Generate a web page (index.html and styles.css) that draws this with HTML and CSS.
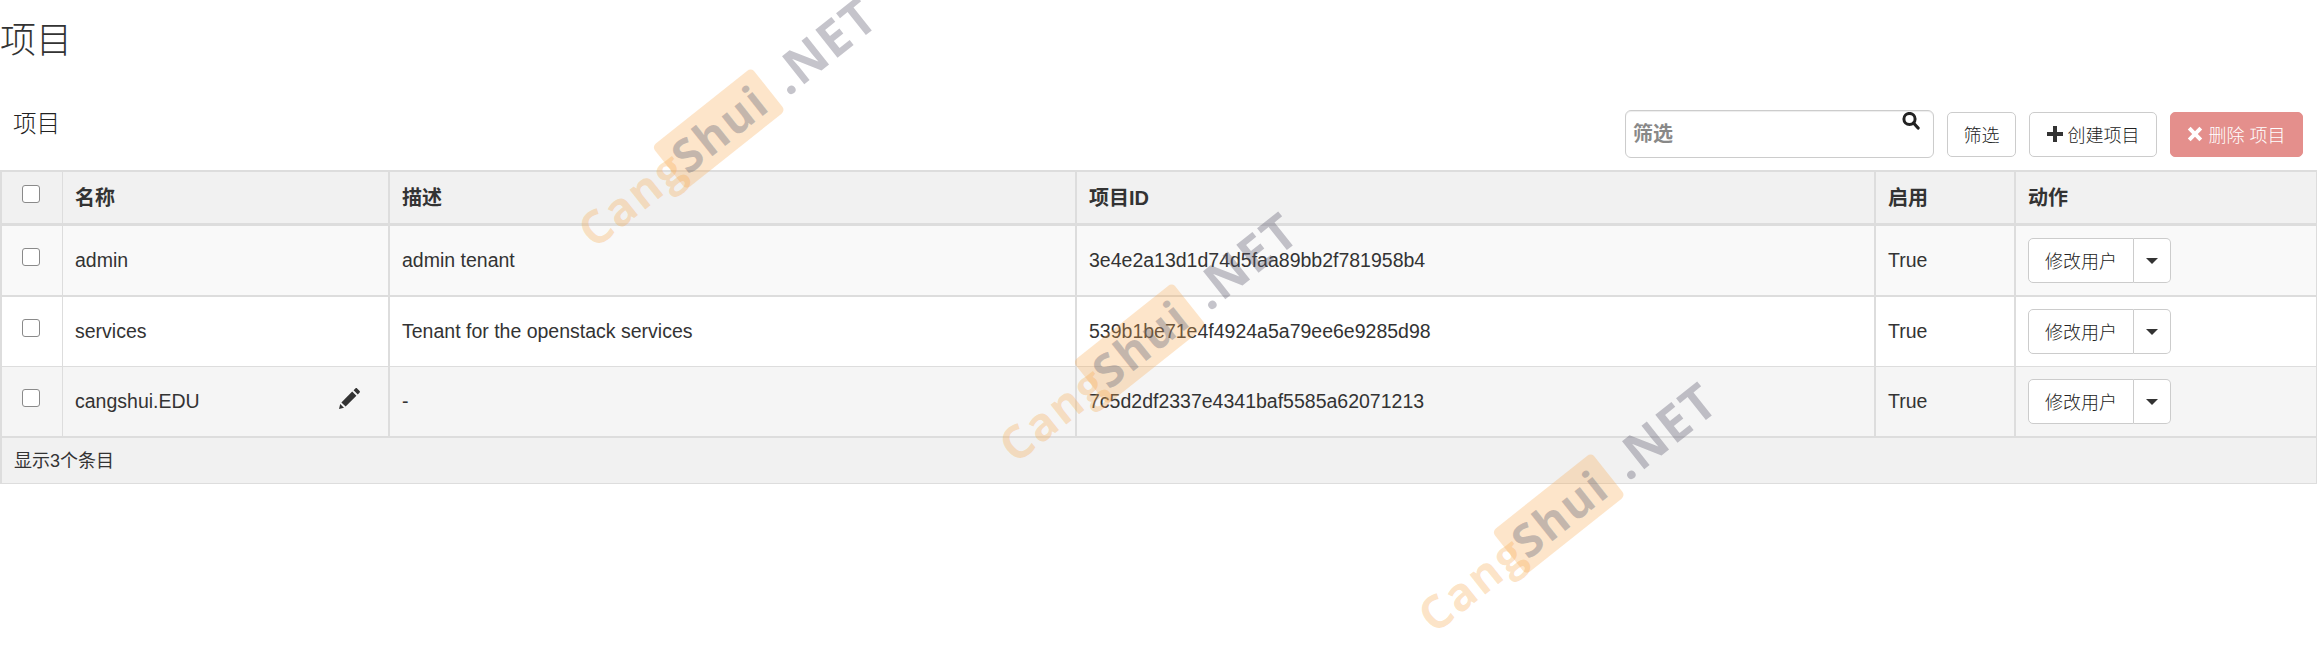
FILE: index.html
```html
<!DOCTYPE html>
<html lang="zh-CN">
<head>
  <meta charset="UTF-8">
  <title>项目</title>
  <link rel="stylesheet" href="styles.css">
</head>
<body>
  <h1 class="page-title">项目</h1>

  <!-- Toolbar -->
  <div class="toolbar">
    <h3 class="table-title">项目</h3>
    <div class="actions">
      <div class="search">
        <input class="search-input" type="text" placeholder="筛选">
        <svg class="search-icon" viewBox="0 0 18 18"><circle cx="7.5" cy="7" r="5.6" fill="none" stroke="#222" stroke-width="3"/><path d="M11.5 11l4.6 5" stroke="#222" stroke-width="3.2" stroke-linecap="round"/></svg>
      </div>
      <button class="btn btn-filter" type="button">筛选</button>
      <button class="btn btn-create" type="button">
        <svg class="btn-icon" viewBox="0 0 16 16"><path d="M6 0h4v6h6v4h-6v6H6v-6H0V6h6z" fill="#333"/></svg>
        创建项目
      </button>
      <button class="btn btn-delete" type="button">
        <svg class="btn-icon" viewBox="0 0 16 16"><path d="M3.6 .8L8 5.2 12.4 .8l2.8 2.8L10.8 8l4.4 4.4-2.8 2.8L8 10.8l-4.4 4.4-2.8-2.8L5.2 8 .8 3.6z" fill="#fff"/></svg>
        删除 项目
      </button>
    </div>
  </div>

  <!-- Main table -->
  <table class="projects">
    <colgroup>
      <col class="col-check">
      <col class="col-name">
      <col class="col-desc">
      <col class="col-id">
      <col class="col-enabled">
      <col class="col-action">
    </colgroup>
    <thead>
      <tr>
        <th class="thin"><input class="check" type="checkbox"></th>
        <th>名称</th>
        <th>描述</th>
        <th>项目ID</th>
        <th>启用</th>
        <th class="thin">动作</th>
      </tr>
    </thead>
    <tbody>
      <tr class="row-odd">
        <td class="thin"><input class="check" type="checkbox"></td>
        <td>admin</td>
        <td>admin tenant</td>
        <td>3e4e2a13d1d74d5faa89bb2f781958b4</td>
        <td>True</td>
        <td class="thin">
          <div class="split"><button class="split-main" type="button">修改用户</button><button class="split-toggle" type="button"><span class="caret"></span></button></div>
        </td>
      </tr>
      <tr class="row-even">
        <td class="thin"><input class="check" type="checkbox"></td>
        <td>services</td>
        <td>Tenant for the openstack services</td>
        <td>539b1be71e4f4924a5a79ee6e9285d98</td>
        <td>True</td>
        <td class="thin">
          <div class="split"><button class="split-main" type="button">修改用户</button><button class="split-toggle" type="button"><span class="caret"></span></button></div>
        </td>
      </tr>
      <tr class="row-hover">
        <td class="thin"><input class="check" type="checkbox"></td>
        <td>
          <div class="name-cell">
            <span>cangshui.EDU</span>
            <svg class="pencil" viewBox="0 0 21 21"><path d="M0 21l1.2-5 3.8 3.8zM2.400 14.400L13.200 3.600 17.400 7.800 6.600 18.600zM14.600 2.200L16.400.4c.5-.5 1.200-.5 1.700 0l2.500 2.500c.5.5.5 1.200 0 1.700l-1.800 1.800z" fill="#333"/></svg>
          </div>
        </td>
        <td>-</td>
        <td>7c5d2df2337e4341baf5585a62071213</td>
        <td>True</td>
        <td class="thin">
          <div class="split"><button class="split-main" type="button">修改用户</button><button class="split-toggle" type="button"><span class="caret"></span></button></div>
        </td>
      </tr>
    </tbody>
    <tfoot>
      <tr>
        <td colspan="6">显示3个条目</td>
      </tr>
    </tfoot>
  </table>

  <!-- Watermarks -->
  <div class="wm wm-1"><span class="wm-cang">Cang</span><span class="wm-shui">Shui</span><span class="wm-net">.NET</span></div>
  <div class="wm wm-2"><span class="wm-cang">Cang</span><span class="wm-shui">Shui</span><span class="wm-net">.NET</span></div>
  <div class="wm wm-3"><span class="wm-cang">Cang</span><span class="wm-shui">Shui</span><span class="wm-net">.NET</span></div>
</body>
</html>
```

FILE: styles.css
```css
/* Reset and base styles */
* {
  margin: 0;
  padding: 0;
  box-sizing: border-box;
}

html,
body {
  overflow: hidden;
}

body {
  position: relative;
  height: 654px;
  font-family: "Liberation Sans", "Noto Sans CJK SC", sans-serif;
  font-size: 18px;
  font-weight: 300;
  line-height: 26px;
  color: #333;
  background: #fff;
}

button,
input {
  font-family: inherit;
  font-size: 18px;
  font-weight: 300;
  color: #222;
}

/* Headings */
.page-title {
  height: 72px;
  padding-top: 16px;
  font-size: 36px;
  line-height: 50px;
  font-weight: 300;
}

.toolbar {
  display: flex;
  justify-content: space-between;
  height: 98px;
  padding: 37px 15px 0 13px;
}

.table-title {
  font-size: 23.5px;
  line-height: 30px;
  font-weight: 300;
  color: #222;
}

/* Toolbar actions */
.actions {
  display: flex;
  align-items: center;
  align-self: flex-start;
  gap: 13px;
  margin-top: 1px;
}

.search {
  position: relative;
}

.search-input {
  display: block;
  width: 309px;
  height: 48px;
  padding: 0 7px;
  border: 1.5px solid #ccc;
  border-radius: 6px;
  box-shadow: inset 0 1px 1px rgba(0, 0, 0, 0.075);
  font-size: 20px;
}

.search-input::placeholder {
  color: #888;
  font-weight: 700;
  opacity: 1;
}

.search-icon {
  position: absolute;
  top: 2px;
  right: 14px;
  width: 18px;
  height: 18px;
}

.btn {
  display: flex;
  align-items: center;
  justify-content: center;
  gap: 5px;
  height: 45px;
  background: #fff;
  border: 1.5px solid #ccc;
  border-radius: 5px;
  font-size: 18px;
}

.btn-filter {
  width: 69px;
}

.btn-create {
  width: 128px;
}

.btn-delete {
  width: 133px;
  background: #e48f8c;
  border-color: #e48f8c;
  color: #fff;
}

.btn-icon {
  width: 16px;
  height: 16px;
}

/* Table */
.projects {
  width: 2317px;
  table-layout: fixed;
  border-spacing: 0;
  border-top: 2px solid #ddd;
  border-left: 2px solid #ddd;
  font-size: 19.5px;
}

.col-check {
  width: 61px;
}

.col-name {
  width: 327px;
}

.col-desc {
  width: 687px;
}

.col-id {
  width: 799px;
}

.col-enabled {
  width: 140px;
}

.projects th,
.projects td {
  padding: 0 12px;
  text-align: left;
  border-right: 2px solid #ddd;
  border-bottom: 2px solid #ddd;
}

.projects tbody td:not(.thin) {
  padding-bottom: 2px;
}

.projects th.thin,
.projects td.thin {
  border-right-width: 1px;
}

.projects th {
  height: 54px;
  background: #f1f1f1;
  border-bottom-width: 3px;
  font-size: 20px;
  font-weight: 700;
}

.projects tbody td {
  height: 71px;
}

.row-odd td {
  background: #f9f9f9;
}

.row-even td {
  background: #fff;
  border-bottom-width: 1px !important;
}

.row-even td {
  height: 70px !important;
}

.row-hover td {
  background: #f5f5f5;
}

.projects tfoot td {
  height: 46px;
  padding: 0 12px;
  background: #f1f1f1;
  border-bottom-width: 1px;
  border-right-width: 1px;
  font-size: 18px;
  font-weight: 400;
}

.projects th:first-child,
.projects tbody td:first-child {
  padding: 0 0 8px 20px;
}

.check {
  display: block;
  width: 18px;
  height: 18px;
  appearance: none;
  background: #fff;
  border: 1.5px solid #8a8a8a;
  border-radius: 3px;
}

.name-cell {
  display: flex;
  align-items: center;
  justify-content: space-between;
  padding-right: 16px;
}

.pencil {
  width: 21px;
  height: 21px;
  margin-top: -4px;
}

/* Split button */
.split {
  display: flex;
  width: 143px;
  height: 45px;
}

.split-main {
  width: 106px;
  padding-bottom: 2px;
  background: #fff;
  border: 1.5px solid #ccc;
  border-radius: 5px 0 0 5px;
}

.split-toggle {
  display: flex;
  align-items: center;
  justify-content: center;
  width: 37px;
  background: #fff;
  border: 1.5px solid #ccc;
  border-left: 0;
  border-radius: 0 5px 5px 0;
}

.caret {
  width: 0;
  height: 0;
  border-top: 6px solid #333;
  border-left: 6px solid transparent;
  border-right: 6px solid transparent;
}

/* Watermarks */
.wm {
  position: absolute;
  display: flex;
  align-items: center;
  font-family: "Open Sans", sans-serif;
  font-size: 46px;
  line-height: 55px;
  font-weight: 700;
  letter-spacing: 2px;
  white-space: nowrap;
  pointer-events: none;
  transform: translate(-50%, -50%) rotate(-38.5deg);
}

.wm-1 {
  left: 727px;
  top: 122px;
}

.wm-2 {
  left: 1148px;
  top: 337px;
}

.wm-3 {
  left: 1567px;
  top: 507px;
}

.wm-cang {
  margin-right: -12px;
  color: rgba(247, 170, 80, 0.32);
}

.wm-shui {
  width: 127px;
  height: 55px;
  padding-left: 10px;
  color: rgba(90, 95, 115, 0.35);
  background: rgba(247, 170, 80, 0.3);
  border-radius: 5px;
}

.wm-net {
  margin-left: 10px;
  font-size: 50px;
  color: rgba(90, 85, 105, 0.35);
}
```
